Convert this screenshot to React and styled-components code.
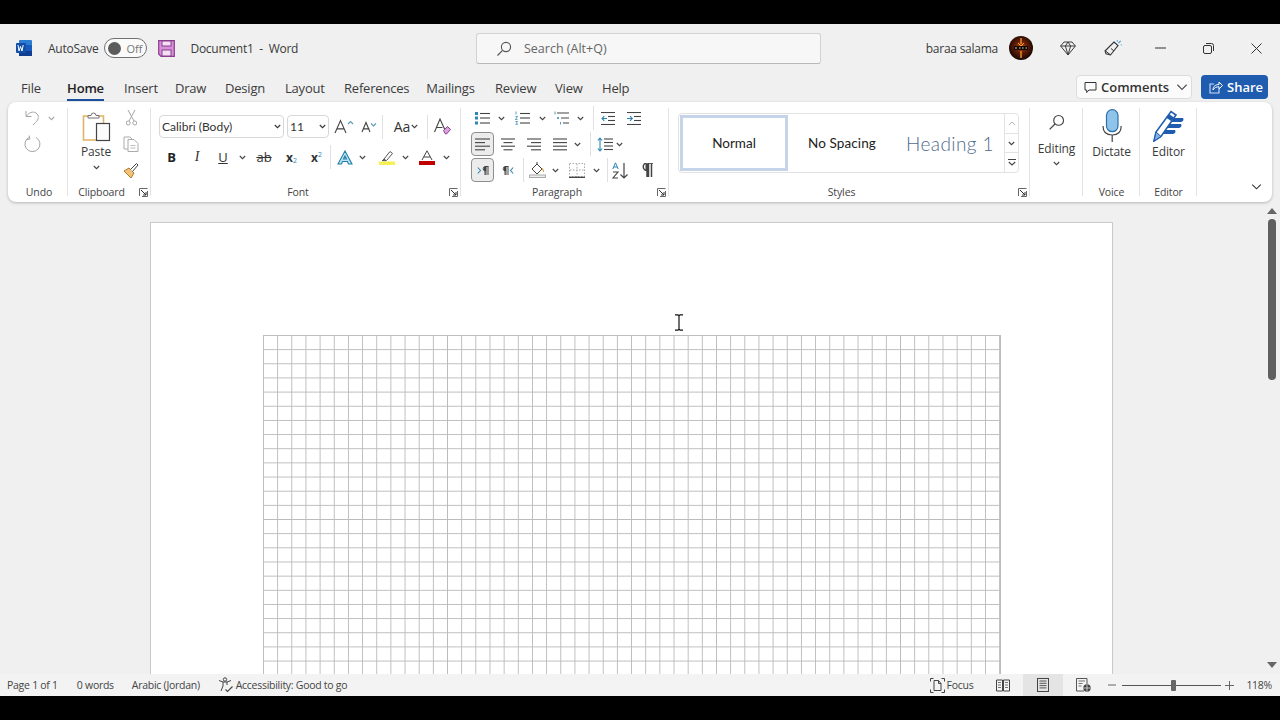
import React from 'react';
import styled, { createGlobalStyle } from 'styled-components';

const GlobalStyle = createGlobalStyle`
  html, body { margin: 0; padding: 0; background: #000; height: 100%; overflow: hidden; }
  body { font-family: "Open Sans", "Noto Sans", "Liberation Sans", sans-serif; color: #333; }
`;

const Frame = styled.div`
  width: 1280px;
  height: 720px;
  padding: 24px 0;
  box-sizing: border-box;
  background: #000;
`;

const Win = styled.div`
  position: relative;
  height: 672px;
  display: flex;
  flex-direction: column;
  background: #f0f0f0;
  overflow: hidden;
`;

/* title bar */
const TitleBar = styled.div`
  height: 48px;
  flex: none;
  display: flex;
  align-items: center;
  position: relative;
`;

const TitleText = styled.span`
  font-size: 12px;
  letter-spacing: -0.25px;
  color: #3a3a3a;
  white-space: nowrap;
  margin-left: ${p => p.$ml || 0}px;
`;

const Toggle = styled.div`
  width: 43px;
  height: 20px;
  margin-left: 6px;
  box-sizing: border-box;
  border: 1px solid #707070;
  border-radius: 10px;
  background: #fafafa;
  display: flex;
  align-items: center;
  padding-left: 3px;
  gap: 5px;
  font-size: 11px;
  color: #777;
`;

const Knob = styled.span`
  width: 13px;
  height: 13px;
  border-radius: 50%;
  background: #5c5c5c;
`;

const SearchBox = styled.div`
  position: absolute;
  left: 476px;
  top: 9px;
  width: 345px;
  height: 31px;
  box-sizing: border-box;
  background: #f7f7f7;
  border: 1px solid #d2d2d2;
  border-bottom-color: #b8b8b8;
  border-radius: 3px;
  display: flex;
  align-items: center;
  padding-left: 19px;
  gap: 12px;
  font-size: 12.5px;
  color: #666;
`;

const TitleRight = styled.div`
  margin-left: auto;
  display: flex;
  align-items: center;
`;

const Slot = styled.div`
  width: ${p => p.$w}px;
  flex: none;
  margin-left: ${p => p.$ml || 0}px;
  margin-top: ${p => p.$mt || 0}px;
  display: flex;
  justify-content: center;
  align-items: center;
`;

/* tabs */
const TabRow = styled.div`
  height: 30px;
  flex: none;
  display: flex;
  align-items: center;
  padding-left: 21px;
  padding-right: 12px;
  position: relative;
`;

const Tab = styled.div`
  font-size: 13px;
  color: ${p => (p.$active ? '#222' : '#3c3c3c')};
  font-weight: ${p => (p.$active ? 600 : 400)};
  margin-right: ${p => p.$mr || 20}px;
  margin-top: 1px;
  width: ${p => p.$w}px;
  text-align: center;
  white-space: nowrap;
  position: relative;
  letter-spacing: -0.2px;
  ${p => p.$active && `
    &::after {
      content: '';
      position: absolute;
      left: 0;
      right: 0;
      bottom: -4px;
      height: 2px;
      background: #1c4f9c;
    }
  `}
`;

const TabActions = styled.div`
  margin-left: auto;
  display: flex;
  align-items: center;
  gap: 9px;
`;

const CommentsBtn = styled.div`
  width: 116px;
  height: 24px;
  box-sizing: border-box;
  background: #fbfbfb;
  border: 1px solid #dcdcdc;
  border-radius: 4px;
  display: flex;
  align-items: center;
  padding-left: 7px;
  gap: 4px;
  font-size: 13px;
  font-weight: 600;
  color: #333;
`;

const ShareBtn = styled.div`
  width: 67px;
  height: 24px;
  box-sizing: border-box;
  background: #1f5cb0;
  border-radius: 4px;
  display: flex;
  align-items: center;
  padding-left: 7px;
  gap: 4px;
  font-size: 13px;
  font-weight: 600;
  color: #fff;
`;

/* ribbon */
const Ribbon = styled.div`
  height: 100px;
  flex: none;
  margin: 0 8px;
  padding-top: 4px;
  box-sizing: border-box;
  background: #fff;
  border-radius: 8px;
  box-shadow: 0 1px 3px rgba(0, 0, 0, 0.25);
  display: flex;
  position: relative;
  z-index: 1;
`;

const Group = styled.div`
  width: ${p => p.$w}px;
  flex: none;
  height: 92px;
  box-sizing: border-box;
  position: relative;
  display: flex;
  flex-direction: column;
  &::after {
    content: '';
    position: absolute;
    right: 0;
    top: 2px;
    bottom: 2px;
    width: 1px;
    background: #e3e3e3;
  }
`;

const GroupBody = styled.div`
  flex: 1;
  min-height: 0;
  box-sizing: border-box;
  padding-left: ${p => p.$pl || 0}px;
  padding-top: ${p => p.$pt || 0}px;
  display: flex;
  flex-direction: ${p => (p.$row ? 'row' : 'column')};
  align-items: ${p => (p.$center ? 'center' : 'stretch')};
`;

const GroupLabel = styled.div`
  height: 14px;
  line-height: 14px;
  margin-bottom: -1px;
  font-size: 10.5px;
  letter-spacing: -0.1px;
  color: #444;
  text-align: center;
  padding-right: ${p => (p.$launcher ? 16 : 0)}px;
  padding-left: ${p => p.$pl || 0}px;
  flex: none;
`;

const Launcher = styled.div`
  position: absolute;
  right: 3px;
  bottom: 1px;
  width: 9px;
  height: 9px;
  display: flex;
`;

const ToolRow = styled.div`
  height: ${p => p.$h || 24}px;
  margin-top: ${p => p.$mt || 0}px;
  display: flex;
  align-items: center;
  flex: none;
`;

const Cell = styled.div`
  width: ${p => p.$w}px;
  height: 100%;
  margin-left: ${p => p.$ml || 0}px;
  flex: none;
  display: flex;
  align-items: center;
  justify-content: center;
  font-family: ${p => (p.$serif ? '"Liberation Serif", serif' : 'inherit')};
  font-size: ${p => p.$fs || 13}px;
  color: ${p => p.$c || '#333'};
  position: relative;
`;

const Sep = styled.div`
  width: 1px;
  height: 24px;
  background: #e0e0e0;
  flex: none;
  margin-left: ${p => p.$ml || 0}px;
`;

const SelectBox = styled.div`
  width: ${p => p.$w}px;
  height: 23px;
  margin-left: ${p => p.$ml || 0}px;
  box-sizing: border-box;
  border: 1px solid #d8d8d8;
  border-radius: 4px;
  flex: none;
  display: flex;
  align-items: center;
  justify-content: space-between;
  padding: 0 2px 0 2px;
  font-family: Lato, "Open Sans", sans-serif;
  font-size: 12px;
  color: #333;
`;

const PressedBtn = styled.div`
  width: 23px;
  height: 24px;
  box-sizing: border-box;
  flex: none;
  border: 1px solid #8f8f8f;
  border-radius: 4px;
  background: #ececec;
  display: flex;
  align-items: center;
  justify-content: center;
`;

const StyleGallery = styled.div`
  margin: 7px 0 0 9px;
  width: 341px;
  height: 60px;
  box-sizing: border-box;
  border: 1px solid #e2e2e2;
  border-radius: 4px;
  display: flex;
  font-family: Lato, "Open Sans", sans-serif;
`;

const StyleItem = styled.div`
  width: ${p => p.$w}px;
  flex: none;
  box-sizing: border-box;
  display: flex;
  align-items: center;
  justify-content: center;
  font-size: ${p => p.$fs || 13.5}px;
  color: ${p => p.$c || '#222'};
  font-weight: ${p => p.$fw || 400};
  letter-spacing: ${p => p.$ls || 0}px;
  ${p => p.$selected && 'border: 3px solid #c5d4e8; margin: 1px 0 1px 1px;'}
`;

const GalleryScroll = styled.div`
  margin-left: auto;
  width: 15px;
  border-left: 1px solid #e2e2e2;
  display: flex;
  flex-direction: column;
`;

const GalleryBtn = styled.div`
  flex: 1;
  display: flex;
  align-items: center;
  justify-content: center;
  & + & { border-top: 1px solid #e2e2e2; }
`;

const BigTool = styled.div`
  display: flex;
  flex-direction: column;
  align-items: center;
  font-size: 12px;
  letter-spacing: -0.1px;
  color: #3a3a3a;
  width: ${p => (p.$w ? `${p.$w}px` : '100%')};
  flex: none;
`;

const BigIcon = styled.div`
  height: ${p => p.$h}px;
  margin-top: ${p => p.$mt || 0}px;
  display: flex;
  align-items: center;
  justify-content: center;
  flex: none;
`;

const BigLabel = styled.div`
  margin-top: ${p => p.$mt || 0}px;
  line-height: 16px;
`;

const Collapse = styled.div`
  position: absolute;
  right: 10px;
  bottom: 11px;
  display: flex;
`;

/* document */
const DocArea = styled.div`
  flex: 1;
  min-height: 0;
  display: flex;
  overflow: hidden;
`;

const PageColumn = styled.div`
  flex: 1;
  padding: 20px 0 0 150px;
`;

const Page = styled.div`
  width: 963px;
  height: 1100px;
  box-sizing: border-box;
  background: #fff;
  border: 1px solid #c9c9c9;
  padding: 112px 0 0 112px;
`;

const GridTable = styled.div`
  width: 738px;
  height: 800px;
  box-sizing: border-box;
  background-color: #fff;
  background-image:
    linear-gradient(#bcbcbc 1px, transparent 1px),
    linear-gradient(90deg, #bcbcbc 1px, transparent 1px);
  background-size: 14.17px 14.17px;
  border-right: 1px solid #bcbcbc;
`;

const Scrollbar = styled.div`
  width: 16px;
  flex: none;
  display: flex;
  flex-direction: column;
  align-items: center;
  padding: 6px 1px 0 0;
  box-sizing: border-box;
  position: relative;
`;

const Thumb = styled.div`
  width: 8px;
  height: 161px;
  margin-top: 5px;
  background: #606060;
  border-radius: 4px;
  flex: none;
`;

const ScrollDown = styled.div`
  margin-top: auto;
  margin-bottom: 6px;
  display: flex;
`;

const Caret = styled.div`
  position: absolute;
  left: 674px;
  top: 290px;
  display: flex;
  z-index: 2;
`;

/* status bar */
const StatusBar = styled.div`
  height: 22px;
  flex: none;
  display: flex;
  align-items: center;
  padding-left: 7px;
  font-size: 10.5px;
  letter-spacing: -0.27px;
  color: #444;
  background: #f3f3f3;
  position: relative;
  z-index: 1;
`;

const StatusText = styled.span`
  margin-left: ${p => p.$ml || 0}px;
  white-space: nowrap;
`;

const StatusRight = styled.div`
  margin-left: auto;
  height: 100%;
  display: flex;
  align-items: center;
  padding-right: 8px;
`;

const ViewBtn = styled.div`
  width: ${p => p.$w}px;
  margin-left: ${p => p.$ml || 0}px;
  height: 100%;
  flex: none;
  display: flex;
  align-items: center;
  justify-content: center;
  background: ${p => (p.$active ? '#e4e4e4' : 'transparent')};
`;

const ZoomTrack = styled.div`
  width: 99px;
  height: 1px;
  margin-left: 6px;
  background: #555;
  position: relative;
  flex: none;
`;

const ZoomThumb = styled.div`
  position: absolute;
  left: 49px;
  top: -5px;
  width: 5px;
  height: 11px;
  background: #666;
  border-radius: 1px;
`;

/* icons */
const Svg = ({ w, h, children, vb }) => (
  <svg width={w} height={h} viewBox={vb || `0 0 ${w} ${h}`} fill="none" style={{ display: 'block', flex: 'none' }}>
    {children}
  </svg>
);

const Chev = ({ c = '#444', w = 7 }) => (
  <Svg w={w} h={(w * 5) / 7} vb="0 0 7 5">
    <path d="M.8 1l2.700 2.700L6.200 1" stroke={c} strokeWidth={w > 7 ? 0.7 : 1.1} />
  </Svg>
);

const LauncherIcon = () => (
  <Svg w={9} h={9}>
    <path d="M.5 8V.5H8.500M3 8.500H8.500V3" stroke="#666" />
    <path d="M2 2l5 5M7 4v3H4" stroke="#333" />
  </Svg>
);

const WordLogo = () => (
  <Svg w={16} h={16}>
    <rect x="3" width="13" height="16" rx="1" fill="#2b7cd3" />
    <rect x="3" y="11" width="13" height="5" fill="#103f91" />
    <rect x="3" y="5" width="13" height="6" fill="#185abd" />
    <rect y="3" width="10" height="10" rx="1" fill="#124fa8" />
    <path d="M2 5l1 6 1.500-4.500L6 11l1.200-6" stroke="#fff" strokeWidth="1" />
  </Svg>
);

const SaveIcon = () => (
  <Svg w={17} h={17}>
    <path d="M.7.7h15.600v15.600H3L.7 14z" fill="#d78fd8" stroke="#8b3d8e" strokeWidth="1.200" />
    <rect x="4" y="1" width="9" height="5" fill="#f3e1f3" stroke="#8b3d8e" />
    <rect x="4" y="10" width="9" height="6" fill="#f3e1f3" stroke="#8b3d8e" />
  </Svg>
);

const SearchIcon = ({ s = 16, c = '#555' }) => (
  <Svg w={s} h={s} vb="0 0 16 16">
    <circle cx="10" cy="6" r="4.600" stroke={c} strokeWidth="1.100" />
    <path d="M6.600 9.400L1.500 14.500" stroke={c} strokeWidth="1.200" />
  </Svg>
);

const Avatar = () => (
  <Svg w={24} h={24}>
    <defs>
      <radialGradient id="fire" cx="50%" cy="45%" r="55%">
        <stop offset="0%" stopColor="#c8581a" />
        <stop offset="40%" stopColor="#6a2006" />
        <stop offset="100%" stopColor="#120503" />
      </radialGradient>
    </defs>
    <circle cx="12" cy="12" r="12" fill="url(#fire)" />
    <path d="M12 2v6M12 15v7" stroke="#e88a28" strokeWidth="1.500" />
    <path d="M9 7l3 3 3-3" stroke="#f0a030" strokeWidth="1" />
    <rect x="5" y="10" width="14" height="4" fill="#140804" />
    <path d="M6 12h2M10 12h1.500M13 12h1.500M16.500 12H18" stroke="#e8c8a0" strokeWidth="1.200" />
  </Svg>
);

const Diamond = () => (
  <Svg w={16} h={15}>
    <path d="M4 1h8l3.400 4L8 14 .6 5zM.6 5h14.800M5.400 5L8 14l2.600-9L8 1 5.400 5" stroke="#3c3c3c" strokeWidth="1" />
  </Svg>
);

const PenSpark = () => (
  <Svg w={18} h={18}>
    <path d="M10 3l4 3.500-7.500 9.500-4.500-1.200-1-2.800z" stroke="#333" strokeWidth="1.100" />
    <path d="M1.500 12l5 3.800M7 9.500l3 2.500" stroke="#333" />
    <path d="M14.500 4l2.200-2.200M13 1.200l.6 1.300M16.800 6l1-.3" stroke="#3b9ad6" strokeWidth="1.100" />
  </Svg>
);

const Minimize = () => <Svg w={11} h={2}><path d="M0 1h11" stroke="#333" /></Svg>;

const Restore = () => (
  <Svg w={11} h={11}>
    <rect x=".5" y="2.500" width="8" height="8" rx="1.500" stroke="#333" />
    <path d="M3 .5h5.500a2 2 0 0 1 2 2V8" stroke="#333" />
  </Svg>
);

const CloseIcon = () => <Svg w={11} h={11}><path d="M.5.5l10 10M10.500.5l-10 10" stroke="#333" /></Svg>;

const CommentIcon = ({ c = '#333' }) => (
  <Svg w={13} h={13}>
    <path d="M1 1.500h11v7.500H5L2.700 11.500V9H1z" stroke={c} strokeWidth="1" />
  </Svg>
);

const ShareIcon = () => (
  <Svg w={15} h={14}>
    <path d="M6 4H2v9h9V9" stroke="#cfe0f5" strokeWidth="1.100" />
    <path d="M5 10c0-4 3-5.500 6-5.500V2l3.500 3.500L11 9V6.800C8.500 6.800 6.500 7.500 5 10z" stroke="#fff" strokeWidth="1" />
  </Svg>
);

const UndoIcon = () => (
  <Svg w={15} h={16}>
    <path d="M1 1v5.500h5.500" stroke="#a5a5a5" />
    <path d="M1.500 6C4 2.500 8 1 11 3c3.500 2.500 3 6.500-.5 9.500L8 15" stroke="#a5a5a5" />
  </Svg>
);

const RedoIcon = () => (
  <Svg w={17} h={17}>
    <path d="M5.500 2.200A7.500 7.500 0 1 0 12 2.500" stroke="#a5a5a5" />
    <path d="M5 .5l1 3.500-3.500.5" stroke="#a5a5a5" />
  </Svg>
);

const PasteIcon = () => (
  <Svg w={29} h={31}>
    <path d="M6 5H1.500v24H14" stroke="#e0b264" strokeWidth="1.600" />
    <path d="M16 5h5.500v7" stroke="#e0b264" strokeWidth="1.600" />
    <path d="M6 7V4.500h3a2.500 2.500 0 0 1 5 0h3V7z" stroke="#6e6e6e" fill="#fff" />
    <rect x="14.500" y="12.500" width="13" height="17" fill="#fbfbfb" stroke="#444" strokeWidth="1.200" />
  </Svg>
);

const CutIcon = () => (
  <Svg w={11} h={16}>
    <path d="M2 0l6 11M9 0L3 11" stroke="#a5a5a5" />
    <circle cx="2.200" cy="13" r="2" stroke="#a5a5a5" />
    <circle cx="8.800" cy="13" r="2" stroke="#a5a5a5" />
  </Svg>
);

const CopyIcon = () => (
  <Svg w={16} h={16}>
    <path d="M5 13H1V1h6l2 2" stroke="#ababab" />
    <path d="M5 3.500h6l4 4V15.500H5z" stroke="#ababab" fill="#fff" />
    <path d="M7.500 9.500h5M7.500 12h5" stroke="#bcbcbc" />
  </Svg>
);

const PainterIcon = () => (
  <Svg w={16} h={16}>
    <path d="M1 9l5-3 5 5-3 5z" fill="#f0c27a" stroke="#b87a20" />
    <path d="M7.500 7.500L13.500 1.500l1.500 1.500-5.500 6.500" stroke="#444" fill="#fff" />
    <path d="M3 11l3 3" stroke="#b87a20" />
  </Svg>
);

const GrowA = ({ s = 16, up }) => (
  <Svg w={s + 6} h={s}>
    <path d={`M1 ${s - 1}L${s / 2 - 1} 1.500L${s - 3} ${s - 1}M${s * 0.2} ${s * 0.66}H${s * 0.7}`} stroke="#444" strokeWidth="1.100" />
    <path d={up ? `M${s - 1} 5l2.500-2.500L${s + 4} 5` : `M${s - 2} 2.500l2.500 2.500 2.500-2.500`} stroke="#5a9bb8" strokeWidth="1.100" />
  </Svg>
);

const ClearFormat = () => (
  <Svg w={17} h={17}>
    <path d="M.5 14L6 1l5 11M2.500 9.500h6" stroke="#444" strokeWidth="1.100" />
    <path d="M9.500 12.500l4-4 3 3-4 4.500h-1z" fill="#d9a3dc" stroke="#8f3a91" strokeWidth="1" />
  </Svg>
);

const TextEffect = () => (
  <Svg w={16} h={15}>
    <path d="M1 14L8 1l7 13h-3.500L10.500 11.500h-5L4.500 14zM6.500 9h3L8 6z" fill="#bfe3f4" stroke="#1f7fa8" strokeWidth="1.100" />
  </Svg>
);

const Highlight = () => (
  <Svg w={16} h={15}>
    <path d="M5 9l6-7.500 2.500 2L7.500 10.500 4.500 11z" stroke="#555" fill="#fff" />
    <path d="M3 11l2-2 2 1.500" fill="#555" stroke="#555" />
    <rect y="11.500" width="16" height="3.500" fill="#f7f052" />
  </Svg>
);

const FontColor = () => (
  <Svg w={16} h={15}>
    <path d="M3 10L8 .8l5 9.200M4.800 7h6.400" stroke="#444" strokeWidth="1" />
    <rect y="11" width="16" height="4" fill="#c00000" />
  </Svg>
);

const Lines = ({ ys, x1 = 0, x2 = 14, c = '#444' }) => ys.map(y => (
  <path key={y} d={`M${x1} ${y}H${x2}`} stroke={c} strokeWidth="1.100" />
));

const Bullets = () => (
  <Svg w={15} h={14}>
    <rect y="1" width="3" height="3" fill="#2d86b3" />
    <rect y="5.500" width="3" height="3" fill="#2d86b3" />
    <rect y="10.500" width="3" height="3" fill="#2d86b3" />
    <Lines ys={[2.500, 7, 12]} x1={5} x2={15} />
  </Svg>
);

const Numbered = () => (
  <Svg w={15} h={14}>
    <path d="M1 .5v3M.5 5.500h2L.5 8.500h2M.5 10.500h2l-1 1.300 1 1.500h-2" stroke="#2d86b3" strokeWidth=".8" />
    <Lines ys={[2.500, 7, 12]} x1={5} x2={15} />
  </Svg>
);

const Multilevel = () => (
  <Svg w={15} h={14}>
    <path d="M1 .5v3" stroke="#2d86b3" strokeWidth=".8" />
    <circle cx="4" cy="7" r="1" fill="#2d86b3" />
    <path d="M6.500 11v2.500" stroke="#2d86b3" strokeWidth=".8" />
    <path d="M3 2h12M7 7h8M9 12h6" stroke="#444" strokeWidth="1.100" />
  </Svg>
);

const Indent = ({ inc }) => (
  <Svg w={14} h={13}>
    <Lines ys={[.5, 12.500]} />
    <Lines ys={[4.500, 8.500]} x1={7} />
    <path d={inc ? 'M0 6.500h5M3 4.200l2.300 2.300L3 8.800' : 'M6 6.500H1M3.300 4.200L1 6.500l2.300 2.300'} stroke="#2d86b3" strokeWidth="1.100" />
  </Svg>
);

const Align = ({ mode }) => {
  const rows = mode === 'left'
    ? [[0, 15], [0, 10], [0, 15], [0, 10]]
    : mode === 'center'
      ? [[0, 14], [2.500, 11.500], [0, 14], [2.500, 11.500]]
      : mode === 'right'
        ? [[0, 14], [4, 14], [0, 14], [4, 14]]
        : [[0, 14], [0, 14], [0, 14], [0, 14]];
  return (
    <Svg w={15} h={13}>
      {rows.map(([a, b], i) => (
        <path key={i} d={`M${a} ${1 + i * 3.600}H${b}`} stroke="#444" strokeWidth="1.100" />
      ))}
    </Svg>
  );
};

const LineSpacing = () => (
  <Svg w={16} h={15}>
    <path d="M3 1v13M.8 3.500L3 1l2.200 2.500M.8 11.500L3 14l2.200-2.500" stroke="#2d86b3" strokeWidth="1.100" />
    <Lines ys={[2, 5.500, 9, 12.500]} x1={7} x2={16} />
  </Svg>
);

const Shading = () => (
  <Svg w={17} h={16}>
    <path d="M3 7l5-5 5 5-5 5z" stroke="#444" />
    <path d="M8 2V0" stroke="#444" />
    <path d="M13 6.500c1.500 1.500 2 2.500 1.500 3.500" stroke="#d9a34a" strokeWidth="1.200" />
    <rect x=".5" y="13" width="16" height="2.500" fill="#eee" stroke="#aaa" />
  </Svg>
);

const Borders = () => (
  <Svg w={16} h={15}>
    <rect x=".5" y=".5" width="15" height="13" stroke="#a9a9a9" strokeDasharray="1.500 1.500" />
    <path d="M8 1v13M1 7h14" stroke="#a9a9a9" strokeDasharray="1.500 1.500" />
    <path d="M0 14.300h16" stroke="#333" strokeWidth="1.200" />
  </Svg>
);

const SortIcon = () => (
  <Svg w={17} h={17}>
    <path d="M.8 7L3.500 .8 6.200 7M1.800 5h3.400" stroke="#2d86b3" strokeWidth="1" />
    <path d="M1 10h5L1 16h5" stroke="#444" strokeWidth="1.100" />
    <path d="M12 1v15M8.500 12.500L12 16l3.500-3.500" stroke="#444" strokeWidth="1.200" />
  </Svg>
);

const Pilcrow = ({ c = '#444', w = 12, h = 14 }) => (
  <Svg w={w} h={h} vb="0 0 12 14">
    <path d="M5 14V7.500a3.700 3.700 0 0 1 0-7.500h6M6.500 0v14M9.500 0v14" stroke={c} strokeWidth="1.500" />
    <path d="M5 1v6" stroke={c} strokeWidth="3" />
  </Svg>
);

const DirLTR = () => (
  <Svg w={12} h={9}>
    <path d="M.8 1.500L3.500 4.500.8 7.500" stroke="#2d86b3" strokeWidth="1.100" />
    <path d="M8 9V5a2.300 2.300 0 0 1 0-4.500h3.500M9 .5V9M11 .5V9" stroke="#444" />
    <path d="M8 1v4" stroke="#444" strokeWidth="2" />
  </Svg>
);

const DirRTL = () => (
  <Svg w={12} h={9}>
    <path d="M11.200 1.500L8.500 4.500l2.700 3" stroke="#2d86b3" strokeWidth="1.100" />
    <path d="M3 9V5a2.300 2.300 0 0 1 0-4.500h3.500M4 .5V9M6 .5V9" stroke="#444" />
    <path d="M3 1v4" stroke="#444" strokeWidth="2" />
  </Svg>
);

const ChevUp = () => (
  <Svg w={8} h={5}><path d="M.8 4L4 1l3.200 3" stroke="#b5b5b5" /></Svg>
);

const MoreIcon = () => (
  <Svg w={8} h={7}>
    <path d="M0 .5h8" stroke="#444" />
    <path d="M.8 3L4 6l3.200-3" stroke="#444" strokeWidth="1.100" />
  </Svg>
);

const Mic = () => (
  <Svg w={20} h={33}>
    <rect x="4.500" y=".7" width="11.500" height="22" rx="5.700" fill="#8fc4ea" stroke="#2f6fa8" strokeWidth="1.200" />
    <path d="M1 17c0 6 3.500 9 9.200 9s9-3 9-9M10.200 26v7" stroke="#444" strokeWidth="1.200" />
  </Svg>
);

const EditorIcon = () => (
  <Svg w={32} h={32}>
    <path d="M16 8h14a2.500 2.500 0 0 1-2 4H14zM13 14h15a2.500 2.500 0 0 1-2 4H11zM9.500 20H22a2.500 2.500 0 0 1-2 4H7.500z" fill="#1f5cb0" />
    <path d="M1 31L3 22 18 1.500 23 5 8 26.500z" stroke="#1f5cb0" strokeWidth="1.600" fill="#fff" />
    <path d="M16 4l5 3.500-3 3.500-5-3.500z" fill="#1f5cb0" />
    <path d="M1 31l2-9 5 4.500z" fill="#7fb0e0" stroke="#1f5cb0" />
  </Svg>
);

const AccessIcon = () => (
  <Svg w={16} h={16}>
    <circle cx="7" cy="2.500" r="1.700" stroke="#444" />
    <path d="M1 3.500l4 1.500h4l4-1.500M5 5v4l-2 5M9 5v3" stroke="#444" />
    <path d="M7.500 12.500l2 2 5-5" stroke="#444" strokeWidth="1.100" />
  </Svg>
);

const FocusIcon = () => (
  <Svg w={15} h={15}>
    <path d="M.5 3.500v-3h3M11.500.5h3v3M14.500 11.500v3h-3M3.500 14.500h-3v-3" stroke="#444" />
    <path d="M4 2.500h4.500l2.500 3v7H4z" stroke="#444" />
    <path d="M8.500 2.500v3H11" stroke="#444" />
  </Svg>
);

const ReadIcon = () => (
  <Svg w={14} h={13}>
    <path d="M.5 1h6v11h-6zM7.500 1h6v11h-6z" stroke="#444" />
    <path d="M2 3.500h3M2 6h3M2 8.500h3M9 3.500h3M9 6h3M9 8.500h3" stroke="#666" strokeWidth=".9" />
  </Svg>
);

const PrintIcon = () => (
  <Svg w={12} h={14}>
    <rect x=".5" y=".5" width="11" height="13" stroke="#444" />
    <path d="M2.500 3h7M2.500 5.300h7M2.500 7.600h7M2.500 9.900h7" stroke="#555" />
  </Svg>
);

const WebIcon = () => (
  <Svg w={15} h={14}>
    <path d="M8 13H.5V.5H11V6" stroke="#555" />
    <path d="M2.500 3h6.500M2.500 5.500h4M2.500 8h3" stroke="#666" strokeWidth=".9" />
    <circle cx="11" cy="10" r="3.700" fill="#444" />
    <path d="M7.500 10h7M11 6.500v7" stroke="#f0f0f0" strokeWidth=".7" />
  </Svg>
);

const IBeam = () => (
  <Svg w={10} h={17}>
    <path d="M1 .8h3l1 1 1-1h3M1 16.200h3l1-1 1 1h3M5 1.800v13.400" stroke="#111" strokeWidth="1.200" />
  </Svg>
);

const tabs = [
  ['File', 20, false, 26], ['Home', 37, true], ['Insert', 31], ['Draw', 30], ['Design', 40], ['Layout', 39],
  ['References', 62], ['Mailings', 49], ['Review', 40], ['View', 27], ['Help', 27],
];

export default function App() {
  return (
    <Frame>
      <GlobalStyle />
      <Win>
        <TitleBar>
          <Slot $w={16} $ml={16}><WordLogo /></Slot>
          <TitleText $ml={16}>AutoSave</TitleText>
          <Toggle><Knob />Off</Toggle>
          <Slot $w={17} $ml={11}><SaveIcon /></Slot>
          <TitleText $ml={15}>Document1&nbsp; -&nbsp; Word</TitleText>
          <SearchBox><SearchIcon />Search (Alt+Q)</SearchBox>
          <TitleRight>
            <TitleText>baraa salama</TitleText>
            <Slot $w={24} $ml={11}><Avatar /></Slot>
            <Slot $w={18} $ml={26}><Diamond /></Slot>
            <Slot $w={18} $ml={27}><PenSpark /></Slot>
            <Slot $w={12} $ml={32}><Minimize /></Slot>
            <Slot $w={12} $ml={36}><Restore /></Slot>
            <Slot $w={12} $ml={36}><CloseIcon /></Slot>
            <Slot $w={18} />
          </TitleRight>
        </TitleBar>

        <TabRow>
          {tabs.map(([name, w, active, mr]) => <Tab key={name} $w={w} $active={active} $mr={mr}>{name}</Tab>)}
          <TabActions>
            <CommentsBtn>
              <CommentIcon />
              Comments
              <Slot $w={12} $ml={3}><Chev w={12} c="#555" /></Slot>
            </CommentsBtn>
            <ShareBtn><ShareIcon />Share</ShareBtn>
          </TabActions>
        </TabRow>

        <Ribbon>
          <Group $w={60}>
            <GroupBody $pl={16} $pt={0}>
              <ToolRow $h={24}>
                <Cell $w={16}><UndoIcon /></Cell>
                <Cell $w={8} $ml={7}><Chev c="#aaa" /></Cell>
              </ToolRow>
              <ToolRow $h={24} $mt={1}>
                <Cell $w={16}><RedoIcon /></Cell>
              </ToolRow>
            </GroupBody>
            <GroupLabel $pl={2}>Undo</GroupLabel>
          </Group>

          <Group $w={83}>
            <GroupBody $row>
              <BigTool $w={56}>
                <BigIcon $h={40}><PasteIcon /></BigIcon>
                <BigLabel $mt={-2}>Paste</BigLabel>
                <Slot $w={8} $mt={5}><Chev /></Slot>
              </BigTool>
              <div>
                <ToolRow $h={26} $mt={-1}><Cell $w={14}><CutIcon /></Cell></ToolRow>
                <ToolRow $h={26}><Cell $w={14}><CopyIcon /></Cell></ToolRow>
                <ToolRow $h={26}><Cell $w={14}><PainterIcon /></Cell></ToolRow>
              </div>
            </GroupBody>
            <GroupLabel $launcher>Clipboard</GroupLabel>
            <Launcher><LauncherIcon /></Launcher>
          </Group>

          <Group $w={310}>
            <GroupBody $pl={8} $pt={9}>
              <ToolRow $h={23}>
                <SelectBox $w={125}>Calibri (Body)<Chev c="#333" /></SelectBox>
                <SelectBox $w={42} $ml={3}>11<Chev c="#333" /></SelectBox>
                <Cell $w={24} $ml={3}><GrowA s={15} up /></Cell>
                <Cell $w={24} $ml={2}><GrowA s={12} /></Cell>
                <Sep />
                <Cell $w={24} $ml={7} $fs={14}>Aa</Cell>
                <Cell $w={8} $ml={-4}><Chev /></Cell>
                <Sep $ml={9} />
                <Cell $w={18} $ml={5}><ClearFormat /></Cell>
              </ToolRow>
              <ToolRow $h={24} $mt={7}>
                <Cell $w={25} $fs={13} $c="#222"><b>B</b></Cell>
                <Cell $w={26} $fs={14} $serif><i>I</i></Cell>
                <Cell $w={26} $fs={13}><u>U</u></Cell>
                <Cell $w={12}><Chev /></Cell>
                <Cell $w={32} $fs={13}><s>ab</s></Cell>
                <Cell $w={23} $fs={12}><b>x</b><sub style={{ fontSize: 7, color: '#2d86b3', marginTop: 6 }}>2</sub></Cell>
                <Cell $w={27} $fs={12}><b>x</b><sup style={{ fontSize: 7, color: '#2d86b3', marginBottom: 6 }}>2</sup></Cell>
                <Sep />
                <Cell $w={26} $ml={1}><TextEffect /></Cell>
                <Cell $w={8} $ml={0}><Chev /></Cell>
                <Cell $w={24} $ml={9}><Highlight /></Cell>
                <Cell $w={8} $ml={2}><Chev /></Cell>
                <Cell $w={20} $ml={8}><FontColor /></Cell>
                <Cell $w={8} $ml={5}><Chev /></Cell>
              </ToolRow>
            </GroupBody>
            <GroupLabel $launcher>Font</GroupLabel>
            <Launcher><LauncherIcon /></Launcher>
          </Group>

          <Group $w={208}>
            <GroupBody $pl={10} $pt={0}>
              <ToolRow>
                <Cell $w={23}><Bullets /></Cell>
                <Cell $w={8} $ml={3}><Chev /></Cell>
                <Cell $w={15} $ml={10}><Numbered /></Cell>
                <Cell $w={8} $ml={8}><Chev /></Cell>
                <Cell $w={15} $ml={8}><Multilevel /></Cell>
                <Cell $w={8} $ml={7}><Chev /></Cell>
                <Sep $ml={9} />
                <Cell $w={14} $ml={7}><Indent /></Cell>
                <Cell $w={14} $ml={12}><Indent inc /></Cell>
              </ToolRow>
              <ToolRow $mt={2}>
                <PressedBtn><Align mode="left" /></PressedBtn>
                <Cell $w={15} $ml={7}><Align mode="center" /></Cell>
                <Cell $w={15} $ml={11}><Align mode="right" /></Cell>
                <Cell $w={15} $ml={11}><Align mode="just" /></Cell>
                <Cell $w={8} $ml={5}><Chev /></Cell>
                <Sep $ml={9} />
                <Cell $w={16} $ml={6}><LineSpacing /></Cell>
                <Cell $w={8} $ml={2}><Chev /></Cell>
              </ToolRow>
              <ToolRow $mt={2}>
                <PressedBtn><DirLTR /></PressedBtn>
                <Cell $w={12} $ml={8}><DirRTL /></Cell>
                <Sep $ml={9} />
                <Cell $w={17} $ml={5}><Shading /></Cell>
                <Cell $w={8} $ml={5}><Chev /></Cell>
                <Cell $w={16} $ml={10}><Borders /></Cell>
                <Cell $w={8} $ml={7}><Chev /></Cell>
                <Sep $ml={7} />
                <Cell $w={17} $ml={4}><SortIcon /></Cell>
                <Cell $w={12} $ml={13}><Pilcrow /></Cell>
              </ToolRow>
            </GroupBody>
            <GroupLabel $launcher>Paragraph</GroupLabel>
            <Launcher><LauncherIcon /></Launcher>
          </Group>

          <Group $w={361}>
            <GroupBody>
              <StyleGallery>
                <StyleItem $w={108} $selected $fs={13.5}>Normal</StyleItem>
                <StyleItem $w={108} $fs={13.5} $ls={0.1}>No Spacing</StyleItem>
                <StyleItem $w={108} $fs={19} $c="#4f6b8c" $fw={300} $ls={0.4}>Heading 1</StyleItem>
                <GalleryScroll>
                  <GalleryBtn><ChevUp /></GalleryBtn>
                  <GalleryBtn><Chev /></GalleryBtn>
                  <GalleryBtn><MoreIcon /></GalleryBtn>
                </GalleryScroll>
              </StyleGallery>
            </GroupBody>
            <GroupLabel $launcher>Styles</GroupLabel>
            <Launcher><LauncherIcon /></Launcher>
          </Group>

          <Group $w={53}>
            <GroupBody>
              <BigTool>
                <BigIcon $h={22} $mt={5}><SearchIcon s={17} c="#444" /></BigIcon>
                <BigLabel $mt={8}>Editing</BigLabel>
                <Slot $w={8} $mt={4}><Chev /></Slot>
              </BigTool>
            </GroupBody>
          </Group>

          <Group $w={57}>
            <GroupBody>
              <BigTool>
                <BigIcon $h={35} $mt={2}><Mic /></BigIcon>
                <BigLabel $mt={1}>Dictate</BigLabel>
              </BigTool>
            </GroupBody>
            <GroupLabel>Voice</GroupLabel>
          </Group>

          <Group $w={57}>
            <GroupBody>
              <BigTool>
                <BigIcon $h={35} $mt={2}><EditorIcon /></BigIcon>
                <BigLabel $mt={1}>Editor</BigLabel>
              </BigTool>
            </GroupBody>
            <GroupLabel>Editor</GroupLabel>
          </Group>

          <Collapse><Chev w={11} c="#333" /></Collapse>
        </Ribbon>

        <DocArea>
          <PageColumn>
            <Page>
              <GridTable />
            </Page>
          </PageColumn>
          <Scrollbar>
            <Svg w={10} h={6}><path d="M5 0l5 6H0z" fill="#666" /></Svg>
            <Thumb />
            <ScrollDown>
              <Svg w={10} h={6}><path d="M5 6L0 0h10z" fill="#666" /></Svg>
            </ScrollDown>
          </Scrollbar>
        </DocArea>

        <StatusBar>
          <StatusText>Page 1 of 1</StatusText>
          <StatusText $ml={19}>0 words</StatusText>
          <StatusText $ml={18}>Arabic (Jordan)</StatusText>
          <Slot $w={16} $ml={18}><AccessIcon /></Slot>
          <StatusText $ml={2}>Accessibility: Good to go</StatusText>
          <StatusRight>
            <FocusIcon />
            <StatusText $ml={2}>Focus</StatusText>
            <ViewBtn $w={14} $ml={23}><ReadIcon /></ViewBtn>
            <ViewBtn $w={40} $ml={13} $active><PrintIcon /></ViewBtn>
            <ViewBtn $w={15} $ml={13}><WebIcon /></ViewBtn>
            <Slot $w={8} $ml={17}><Svg w={8} h={2}><path d="M0 1h8" stroke="#666" /></Svg></Slot>
            <ZoomTrack><ZoomThumb /></ZoomTrack>
            <Slot $w={9} $ml={4}><Svg w={9} h={9}><path d="M0 4.500h9M4.500 0v9" stroke="#666" /></Svg></Slot>
            <StatusText $ml={12}>118%</StatusText>
          </StatusRight>
        </StatusBar>

        <Caret><IBeam /></Caret>
      </Win>
    </Frame>
  );
}
